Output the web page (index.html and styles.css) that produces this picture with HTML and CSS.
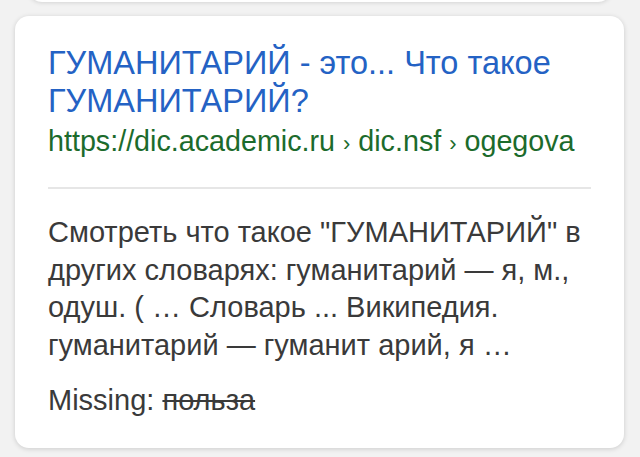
FILE: index.html
```html
<!DOCTYPE html>
<html lang="ru">
<head>
<meta charset="utf-8">
<link rel="stylesheet" href="styles.css">
</head>
<body>
<div class="prev-card"></div>
<div class="card">
  <a class="title" href="#">ГУМАНИТАРИЙ - это... Что такое ГУМАНИТАРИЙ?</a>
  <div class="url">https://dic.academic.ru <span class="sep">›</span> dic.nsf <span class="sep">›</span> ogegova</div>
  <hr class="divider">
  <p class="snippet">Смотреть что такое "ГУМАНИТАРИЙ" в других словарях: гуманитарий — я, м., одуш. ( … Словарь ... Википедия. гуманитарий — гуманит арий, я …</p>
  <p class="missing">Missing: <s>польза</s></p>
</div>
</body>
</html>
```
FILE: styles.css
```css
html, body {
  margin: 0;
  padding: 0;
}
body {
  background: #f2f2f2;
  width: 640px;
  height: 457px;
  overflow: hidden;
  font-family: "Liberation Sans", Arial, sans-serif;
}
.prev-card {
  margin: -20px 28px 0 28px;
  height: 22px;
  background: #fff;
  border-radius: 0 0 14px 14px;
  box-shadow: 0 1px 4px rgba(0,0,0,0.12);
}
.card {
  margin: 14px 16px 0 15px;
  height: 432px;
  box-sizing: border-box;
  background: #fff;
  border-radius: 14px;
  box-shadow: 0 1px 5px rgba(0,0,0,0.16);
  padding: 28px 28px 0 33px;
}
.title {
  display: block;
  color: #2462c4;
  text-decoration: none;
  font-size: 32.5px;
  line-height: 38px;
}
.url {
  color: #1c6b2c;
  font-size: 28.7px;
  line-height: 38px;
  margin-top: 2px;
  white-space: nowrap;
}
.sep {
  font-size: 22px;
}
.divider {
  border: 0;
  border-top: 2px solid #e6e6e6;
  margin: 24px 5px 0 0;
}
.snippet {
  margin: 25px 0 0 0;
  color: #3a3a3a;
  font-size: 29px;
  line-height: 37.7px;
}
.missing {
  margin: 16px 0 0 0;
  color: #3a3a3a;
  font-size: 29px;
  line-height: 38px;
}
.missing s {
  text-decoration-thickness: 2px;
}
```
